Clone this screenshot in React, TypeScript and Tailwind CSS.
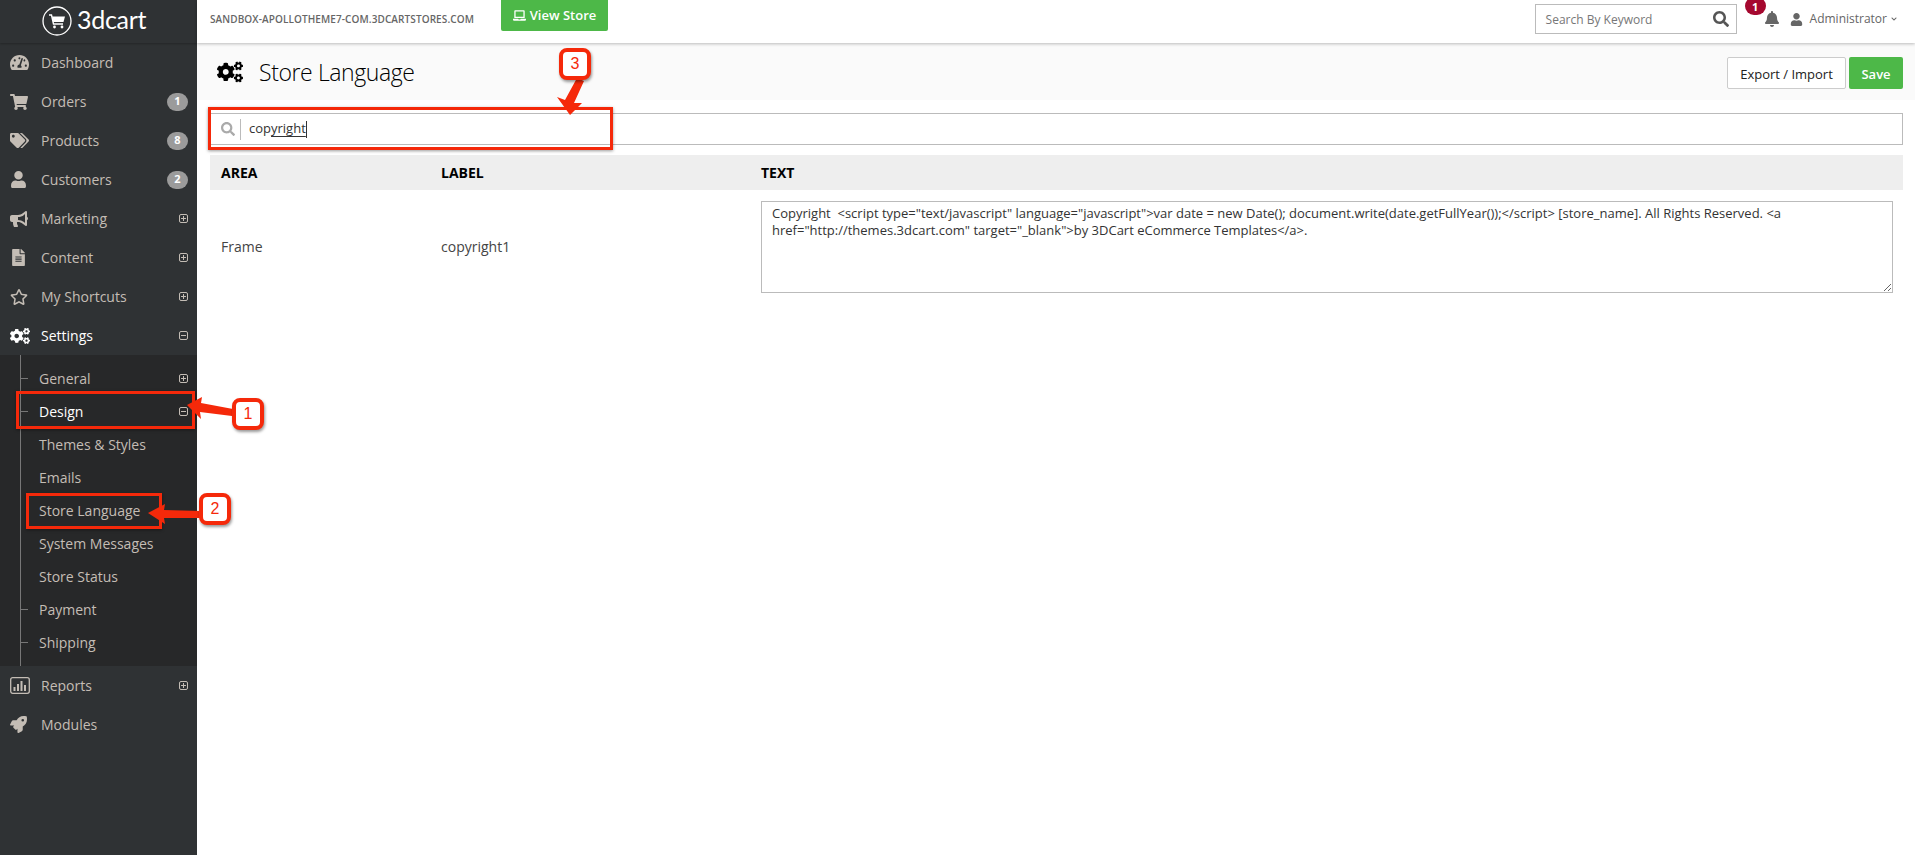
import { FaTachometerAlt, FaShoppingCart, FaTags, FaUser, FaBullhorn, FaFileAlt, FaRegStar, FaCogs, FaRocket, FaBell, FaSearch, FaLaptop, FaChevronDown } from "react-icons/fa";
import type { ReactNode } from "react";

const font = { fontFamily: '"Open Sans", "Noto Sans", sans-serif' };

function ReportsIcon() {
  return (
    <svg viewBox="0 0 20 17" className="w-5 h-[17px]" fill="none">
      <rect x="0.7" y="0.7" width="18.6" height="15.6" rx="2" stroke="currentColor" strokeWidth="1.3" />
      <rect x="3.5" y="10" width="2" height="4" fill="currentColor" />
      <rect x="7" y="7" width="2" height="7" fill="currentColor" />
      <rect x="10.5" y="4" width="2" height="10" fill="currentColor" />
      <rect x="14" y="8" width="2" height="6" fill="currentColor" />
    </svg>
  );
}

function Toggle({ open }: { open?: boolean }) {
  return (
    <span className="relative w-[9px] h-[9px] border border-[#c4bdb5] rounded-[2px] shrink-0 flex items-center justify-center">
      <span className="w-[5px] h-px bg-[#c4bdb5]" />
      {!open && <span className="absolute w-px h-[5px] bg-[#c4bdb5]" />}
    </span>
  );
}

const topItems: { label: string; icon: ReactNode; count?: string; toggle?: boolean }[] = [
  { label: "Dashboard", icon: <FaTachometerAlt size={19} /> },
  { label: "Orders", icon: <FaShoppingCart size={18} />, count: "1" },
  { label: "Products", icon: <FaTags size={19} />, count: "8" },
  { label: "Customers", icon: <FaUser size={17} />, count: "2" },
  { label: "Marketing", icon: <FaBullhorn size={18} />, toggle: true },
  { label: "Content", icon: <FaFileAlt size={17} />, toggle: true },
  { label: "My Shortcuts", icon: <FaRegStar size={18} />, toggle: true },
];

const subItems = [
  { label: "General", tick: true, toggle: "plus" },
  { label: "Design", tick: true, toggle: "minus", active: true },
  { label: "Themes & Styles" },
  { label: "Emails" },
  { label: "Store Language" },
  { label: "System Messages" },
  { label: "Store Status" },
  { label: "Payment", tick: true },
  { label: "Shipping", tick: true },
];

function NavRow({ icon, label, count, toggle, open, active }: { icon: ReactNode; label: string; count?: string; toggle?: boolean; open?: boolean; active?: boolean }) {
  return (
    <div className={`h-[39px] flex items-center pr-[9px] text-[14px] ${active ? "text-white font-medium" : "text-[#c4bdb5]"}`}>
      <span className={`w-[41px] pl-[10px] shrink-0 flex items-center ${active ? "text-white" : ""}`}>{icon}</span>
      <span className="flex-1">{label}</span>
      {count && <span className="w-[21px] h-[18px] rounded-full bg-[#9b9b9b] text-white text-[11px] font-bold flex items-center justify-center">{count}</span>}
      {toggle && <Toggle open={open} />}
    </div>
  );
}

function Sidebar() {
  return (
    <aside className="w-[197px] shrink-0 bg-[#2f3234] flex flex-col">
      <div className="h-[43px] flex items-center pl-[42px] gap-[5px] text-white shadow-[0_1px_2px_rgba(0,0,0,0.25)]">
        <svg viewBox="0 0 30 30" className="w-[30px] h-[30px] -mt-[2px]" fill="none">
          <circle cx="15" cy="15" r="14" stroke="white" strokeWidth="1.3" />
          <path d="M7 9h2.5l2 9h9.5" stroke="white" strokeWidth="1.4" />
          <path d="M10 10.5h13l-1.5 5.5h-10.3z" fill="white" />
          <circle cx="12.5" cy="21" r="1.4" fill="white" />
          <circle cx="20" cy="21" r="1.4" fill="white" />
        </svg>
        <span className="text-[25px] leading-none -mt-[5px] tracking-[-0.3px]" style={{ fontFamily: "Lato, sans-serif" }}>3dcart</span>
      </div>
      {topItems.map((it) => (
        <NavRow key={it.label} icon={it.icon} label={it.label} count={it.count} toggle={it.toggle} />
      ))}
      <NavRow icon={<FaCogs size={20} />} label="Settings" toggle open active />
      <div className="relative bg-[#272829] pt-[7px] pb-[7px]">
        <span className="absolute left-[20px] top-0 bottom-0 w-px bg-[#777]" />
        {subItems.map((s) => (
          <div key={s.label} className={`relative h-[33px] flex items-center pl-[39px] pr-[9px] text-[14px] ${s.active ? "text-white font-medium" : "text-[#c4bdb5]"}`}>
            {s.tick && <span className="absolute left-[20px] top-[16px] w-[8px] h-px bg-[#777]" />}
            <span className="flex-1">{s.label}</span>
            {s.toggle && <Toggle open={s.toggle === "minus"} />}
          </div>
        ))}
      </div>
      <NavRow icon={<ReportsIcon />} label="Reports" toggle />
      <NavRow icon={<FaRocket size={17} />} label="Modules" />
    </aside>
  );
}

function Header() {
  return (
    <header className="h-[43px] shrink-0 bg-white shadow-[0_1px_3px_rgba(0,0,0,0.25)] z-10 flex items-start pl-[13px] pr-[18px]">
      <div className="h-[38px] flex items-center text-[10px] font-semibold text-[#666] tracking-[0.1px] w-[291px]">SANDBOX-APOLLOTHEME7-COM.3DCARTSTORES.COM</div>
      <button className="h-[31px] w-[107px] bg-[#4db848] rounded-b-[2px] text-white text-[13px] font-semibold flex items-center justify-center gap-[4px]">
        <FaLaptop size={13} /> View Store
      </button>
      <div className="ml-auto flex items-start">
        <div className="mt-[4px] w-[202px] h-[30px] border border-[#bbb] flex items-center pl-[10px] pr-[7px]">
          <span className="flex-1 pt-px text-[12px] text-[#777]">Search By Keyword</span>
          <FaSearch size={16} className="text-[#555]" />
        </div>
        <div className="relative w-[34px] h-[38px] ml-[11px] flex items-center justify-center text-[#666]">
          <FaBell size={16} className="ml-[14px]" />
          <span className="absolute -left-[3px] -top-[3px] w-[21px] h-[18px] rounded-full bg-[#a5082f] text-white text-[11px] leading-none font-bold flex items-center justify-center">1</span>
        </div>
        <div className="h-[38px] ml-[8px] flex items-center text-[12px] text-[#666]">
          <FaUser size={13} className="mr-[7px]" />
          <span>Administrator</span>
          <FaChevronDown size={6} className="ml-[4px]" />
        </div>
      </div>
    </header>
  );
}

const copyText =
  'Copyright  <script type="text/javascript" language="javascript">var date = new Date(); document.write(date.getFullYear());</script> [store_name]. All Rights Reserved. <a href="http://themes.3dcart.com" target="_blank">by 3DCart eCommerce Templates</a>.';

function Content() {
  return (
    <main className="flex-1 flex flex-col min-w-0 bg-white">
      <Header />
      <div className="h-[57px] shrink-0 bg-[#fafafa] flex items-center pl-[20px] pr-[12px]">
        <FaCogs size={26} className="text-black" />
        <h1 className="ml-[16px] pt-px text-[23px] font-light text-black tracking-[-0.4px]">Store Language</h1>
        <button className="ml-auto w-[119px] h-[32px] mt-[3px] pt-[3px] bg-white border border-[#ccc] rounded-[2px] text-[13px] text-[#222]">Export / Import</button>
        <button className="ml-[3px] w-[54px] h-[32px] mt-[3px] pt-[3px] bg-[#4db848] rounded-[2px] text-[13px] font-semibold text-white">Save</button>
      </div>
      <div className="pl-[13px] pr-[12px] pt-[13px]">
        <div className="h-[32px] border border-[#bbb] flex items-center pl-[10px]">
          <FaSearch size={14} className="text-[#aaa]" />
          <span className="ml-[5px] w-px h-[21px] bg-[#bbb]" />
          <span className="ml-[8px] text-[13px] text-[#333] flex items-center">
            cop<span className="underline decoration-[#333] underline-offset-[3px]">yright</span>
            <span className="w-px h-[17px] bg-[#333]" />
          </span>
        </div>
        <div className="mt-[10px] h-[35px] bg-[#eeeeee] flex items-center text-[14px] font-bold text-black">
          <span className="w-[231px] pl-[11px]">AREA</span>
          <span className="w-[320px]">LABEL</span>
          <span>TEXT</span>
        </div>
        <div className="flex items-center pt-[11px] text-[14px] text-[#444]">
          <span className="w-[231px] pl-[11px] pb-[2px]">Frame</span>
          <span className="w-[320px] pb-[2px]">copyright1</span>
          <textarea
            readOnly
            defaultValue={copyText}
            className="flex-1 mr-[10px] h-[92px] border border-[#bbb] px-[10px] py-[3px] text-[13px] leading-[17px] text-[#333] outline-none"
          />
        </div>
      </div>
    </main>
  );
}

function Callout({ n, className }: { n: string; className: string }) {
  return (
    <span className={`absolute w-[32px] h-[32px] bg-white border-[4px] border-[#f5290a] rounded-[8px] text-[#f5290a] text-[16px] flex items-center justify-center shadow-[1px_2px_3px_rgba(0,0,0,0.4)] ${className}`} style={{ fontFamily: '"Liberation Sans", sans-serif' }}>
      {n}
    </span>
  );
}

function Annotations() {
  const box = "absolute border-[3px] border-[#f5290a] shadow-[0_1px_3px_rgba(0,0,0,0.4)]";
  return (
    <>
      <span className={`${box} left-[16px] top-[391px] w-[179px] h-[38px]`} />
      <span className={`${box} left-[26px] top-[493px] w-[136px] h-[36px]`} />
      <span className={`${box} left-[208px] top-[107px] w-[405px] h-[43px]`} />
      <svg className="absolute left-0 top-0 pointer-events-none" width="1915" height="855" fill="#f5290a">
        <path d="M187 405 L202 397 L201 403 L233 409 L232 416 L200 412 L201 419 Z" />
        <path d="M148 513 L165 504 L164 510 L201 511 L201 518 L164 518 L165 524 Z" />
        <path d="M570 115 L557 97 L565 100 L577 78 L584 81 L574 103 L582 103 Z" />
      </svg>
      <Callout n="1" className="left-[232px] top-[398px]" />
      <Callout n="2" className="left-[199px] top-[493px]" />
      <Callout n="3" className="left-[559px] top-[48px]" />
    </>
  );
}

export default function App() {
  return (
    <div className="relative flex w-full h-[855px] overflow-hidden" style={font}>
      <Sidebar />
      <Content />
      <Annotations />
    </div>
  );
}
